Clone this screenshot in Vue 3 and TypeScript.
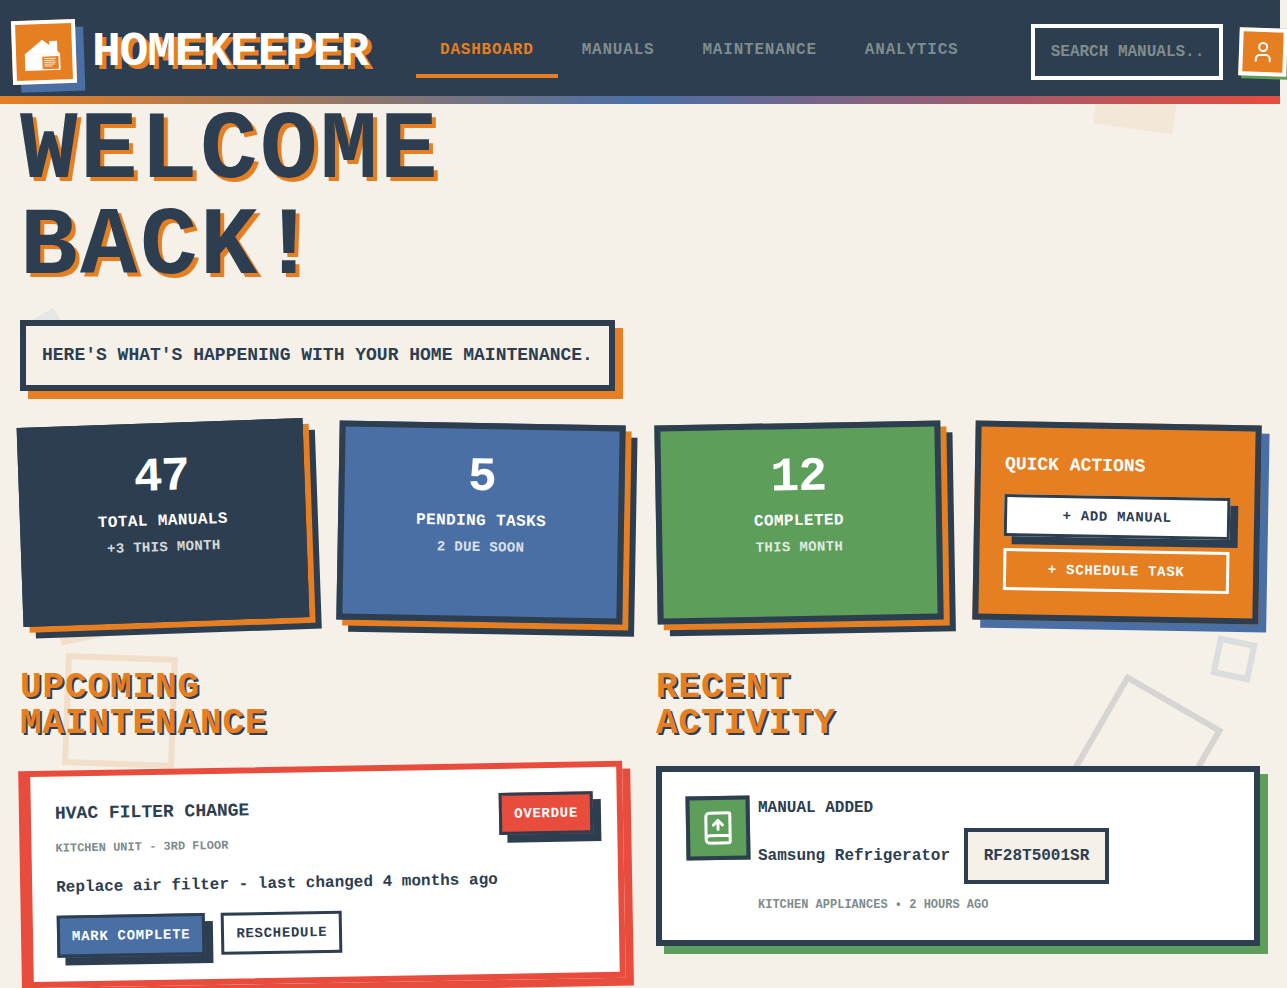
<script setup lang="ts">
interface NavLink { label: string; active: boolean }
interface Stat { value: string; label: string; note: string; tone: string }

const links: NavLink[] = [
  { label: 'DASHBOARD', active: true },
  { label: 'MANUALS', active: false },
  { label: 'MAINTENANCE', active: false },
  { label: 'ANALYTICS', active: false },
]

const stats: Stat[] = [
  { value: '47', label: 'TOTAL MANUALS', note: '+3 THIS MONTH', tone: 'navy' },
  { value: '5', label: 'PENDING TASKS', note: '2 DUE SOON', tone: 'blue' },
  { value: '12', label: 'COMPLETED', note: 'THIS MONTH', tone: 'green' },
]

const shapes: string[] = ['block-orange', 'block-blue', 'strip-orange', 'frame-orange', 'frame-blue', 'frame-navy']
</script>

<template>
  <div class="page">
    <div class="shapes" aria-hidden="true">
      <span v-for="shape in shapes" :key="shape" class="shape" :class="shape"></span>
    </div>

    <header class="header">
      <div class="brand">
        <div class="brand-icon">
          <svg width="40" height="40" viewBox="0 0 40 40">
            <path fill="#fff" d="M.7 21.8 18.4 7.8 25.4 13.2V9.2h8v10.2L36 22v16.3H.7z" />
            <path fill="none" stroke="#e67e22" stroke-width=".1" d="M2 22h33" />
            <path fill="#e67e22" d="M18.1 24.6h16.2v12.6H18.1z" />
            <path fill="none" stroke="#fff" stroke-width=".8" d="M20 26.6h11.8M20 28.5h10.5M20 30.4h11.8M20 32.3h10.5M20 34.2h8" />
          </svg>
        </div>
        <span class="brand-name">HOMEKEEPER</span>
      </div>
      <nav class="nav">
        <a v-for="link in links" :key="link.label" class="nav-link" :class="{ active: link.active }">{{ link.label }}</a>
      </nav>
      <div class="tools">
        <input class="search" type="text" placeholder="SEARCH MANUALS..." />
        <button class="user" aria-label="Account">
          <svg width="24" height="24" viewBox="0 0 24 24" fill="none" stroke="#fff" stroke-width="2" stroke-linecap="round" stroke-linejoin="round">
            <path d="M19 21v-2a4 4 0 0 0-4-4H9a4 4 0 0 0-4 4v2" />
            <circle cx="12" cy="7" r="4" />
          </svg>
        </button>
      </div>
    </header>

    <main class="main">
      <h1 class="title">WELCOME<br />BACK!</h1>
      <p class="subtitle">HERE'S WHAT'S HAPPENING WITH YOUR HOME MAINTENANCE.</p>

      <section class="stats">
        <article v-for="stat in stats" :key="stat.label" class="stat" :class="stat.tone">
          <div class="stat-value">{{ stat.value }}</div>
          <div class="stat-label">{{ stat.label }}</div>
          <div class="stat-note">{{ stat.note }}</div>
        </article>
        <article class="stat quick">
          <h3 class="quick-title">QUICK ACTIONS</h3>
          <div class="quick-list">
            <button class="btn btn-white raised">+ ADD MANUAL</button>
            <button class="btn btn-clear">+ SCHEDULE TASK</button>
          </div>
        </article>
      </section>

      <section class="columns">
        <div class="column">
          <h2 class="heading">UPCOMING<br />MAINTENANCE</h2>
          <article class="task">
            <div class="task-head">
              <div>
                <h3 class="task-title">HVAC FILTER CHANGE</h3>
                <p class="meta"><span>KITCHEN UNIT - 3RD FLOOR</span></p>
              </div>
              <span class="btn btn-red raised">OVERDUE</span>
            </div>
            <p class="task-text">Replace air filter - last changed 4 months ago</p>
            <div class="task-actions">
              <button class="btn btn-blue raised">MARK COMPLETE</button>
              <button class="btn btn-white">RESCHEDULE</button>
            </div>
          </article>
        </div>

        <div class="column">
          <h2 class="heading">RECENT<br />ACTIVITY</h2>
          <article class="activity">
            <div class="activity-icon">
              <svg width="36" height="36" viewBox="0 0 24 24" fill="none" stroke="#fff" stroke-width="2" stroke-linecap="round" stroke-linejoin="round">
                <path d="M12 13V7" />
                <path d="m9 10 3-3 3 3" />
                <path d="M4 19.5v-15A2.5 2.5 0 0 1 6.5 2H19a1 1 0 0 1 1 1v18a1 1 0 0 1-1 1H6.5a1 1 0 0 1 0-5H20" />
              </svg>
            </div>
            <div class="activity-body">
              <p>MANUAL ADDED</p>
              <p class="model-row">Samsung Refrigerator <span class="model">RF28T5001SR</span></p>
              <p class="meta"><span>KITCHEN APPLIANCES • 2 HOURS AGO</span></p>
            </div>
          </article>
        </div>
      </section>
    </main>
  </div>
</template>

<style>
html,
body {
  margin: 0;
  height: 988px;
  overflow: hidden;
  background: #f5f0e8;
}
</style>

<style scoped>
.page {
  --navy: #2c3e50;
  --orange: #e67e22;
  --blue: #4a6fa5;
  --green: #5d9e5a;
  --red: #e74c3c;
  --cream: #f5f0e8;
  --gray: #7f8c8d;
  position: relative;
  width: 1287px;
  height: 988px;
  overflow: hidden;
  background: var(--cream);
  color: var(--navy);
  font: bold 16px/24px "Liberation Mono", "Courier New", monospace;
}
.page * { box-sizing: border-box; }
h1, h2, h3, p { margin: 0; font-weight: bold; }
svg { display: block; flex: none; }
button, input { font: inherit; border-radius: 0; }

/* Decorative shapes scattered behind the content */
.shape { position: absolute; }
.block-orange { left: 1098px; top: 49px; width: 80px; height: 80px; background: var(--orange); opacity: .08; transform: rotate(8deg); }
.block-blue { left: 26px; top: 315px; width: 40px; height: 40px; background: var(--blue); opacity: .08; transform: rotate(-30deg); }
.strip-orange { left: 55px; top: 580px; width: 60px; height: 60px; background: var(--orange); opacity: .15; transform: rotate(-12deg); }
.frame-orange { left: 64px; top: 655px; width: 112px; height: 112px; border: 6px solid var(--orange); opacity: .15; transform: rotate(2deg); }
.frame-blue { left: 1214px; top: 639px; width: 40px; height: 40px; border: 6px solid var(--blue); opacity: .15; transform: rotate(12deg); }
.frame-navy { left: 1091px; top: 694px; width: 112px; height: 112px; border: 6px solid var(--navy); opacity: .15; transform: rotate(30deg); }

.header {
  position: relative;
  display: flex;
  align-items: center;
  gap: 48px;
  width: 1280px;
  height: 104px;
  padding-left: 12px;
  background: var(--navy);
}
.header::after {
  content: "";
  position: absolute;
  left: 0;
  right: 0;
  bottom: 0;
  height: 8px;
  background: linear-gradient(90deg, var(--orange), var(--blue), var(--red));
}
.brand { display: flex; align-items: center; gap: 16px; flex: none; }
.brand-icon {
  display: flex;
  align-items: center;
  justify-content: center;
  width: 64px;
  height: 64px;
  border: 4px solid #fff;
  background: var(--orange);
  box-shadow: 8px 8px 0 var(--blue);
  transform: rotate(-2deg);
}
.brand-name {
  width: 276px;
  color: #fff;
  font-size: 48px;
  line-height: 48px;
  letter-spacing: -1.2px;
  text-shadow: 4px 4px 0 var(--orange);
}
.nav { display: flex; flex: none; }
.nav-link {
  padding: 12px 24px;
  border-bottom: 4px solid transparent;
  color: var(--gray);
  letter-spacing: .8px;
}
.nav-link.active { color: var(--orange); border-color: var(--orange); }
.tools { display: flex; align-items: center; gap: 16px; flex: none; margin-left: .2px; }
.search {
  width: 192px;
  height: 56px;
  padding: 12px 16px;
  border: 4px solid #fff;
  outline: 0;
  background: var(--navy);
  color: #fff;
}
.search::placeholder { color: var(--gray); opacity: 1; }
.user {
  display: flex;
  align-items: center;
  justify-content: center;
  width: 48px;
  height: 48px;
  padding: 0;
  border: 4px solid #fff;
  background: var(--orange);
  box-shadow: 3px 3px 0 var(--green);
  transform: rotate(2deg);
}

.main { position: relative; width: 1280px; padding: 0 20px; }
.title {
  font-size: 96px;
  line-height: 96px;
  letter-spacing: 2.4px;
  text-shadow: 4px 4px 0 var(--orange);
}
.subtitle {
  width: fit-content;
  margin-top: 24px;
  padding: 16px;
  border: 6px solid var(--navy);
  background: var(--cream);
  box-shadow: 8px 8px 0 var(--orange);
  font-size: 18px;
  line-height: 27px;
}

.stats { display: grid; grid-template-columns: repeat(4, 1fr); gap: 32px; margin-top: 32px; }
.stat {
  padding: 24px;
  border: 6px solid var(--navy);
  box-shadow: 6px 6px 0 var(--orange), 12px 12px 0 var(--navy);
  color: #fff;
  text-align: center;
}
.navy { background: var(--navy); transform: rotate(-2deg); }
.blue { background: var(--blue); transform: rotate(1deg); }
.green { background: var(--green); transform: rotate(-1deg); }
.quick { background: var(--orange); box-shadow: 8px 8px 0 var(--blue); text-align: left; transform: rotate(1deg); }
.stat-value { font-size: 48px; line-height: 48px; letter-spacing: -1.2px; }
.stat-label { margin-top: 8px; letter-spacing: .4px; }
.stat-note { margin-top: 4px; font-size: 14px; line-height: 21px; letter-spacing: .35px; opacity: .8; }
.quick-title { font-size: 18px; line-height: 27px; }
.quick-list { display: flex; flex-direction: column; gap: 12px; margin-top: 16px; }

.btn {
  display: block;
  flex: none;
  padding: 8px 12px;
  border: 3px solid var(--navy);
  font-size: 14px;
  line-height: 20px;
  letter-spacing: .7px;
  text-align: center;
}
.raised { box-shadow: 8px 8px 0 var(--navy); }
.btn-white { background: #fff; color: var(--navy); }
.btn-clear { background: transparent; color: #fff; border-color: #fff; }
.btn-blue { background: var(--blue); color: #fff; }
.btn-red { background: var(--red); color: #fff; }

.columns { display: grid; grid-template-columns: 1fr 1fr; gap: 32px; margin-top: 48px; }
.column { display: flex; flex-direction: column; gap: 24px; }
.heading {
  color: var(--orange);
  font-size: 36px;
  line-height: 36px;
  letter-spacing: .9px;
  text-shadow: 2px 2px 0 var(--navy);
}
.task {
  padding: 24px;
  border: 6px solid var(--red);
  border-left-width: 12px;
  background: #fff;
  box-shadow: 8px 8px 0 var(--red);
  transform: rotate(-1deg);
}
.task-head { display: flex; align-items: flex-start; justify-content: space-between; }
.task-title { font-size: 18px; line-height: 27px; }
.meta { height: 24px; margin-top: 8px; color: var(--gray); }
.meta span { font-size: 12px; }
.task-text { margin-top: 16px; }
.task-actions { display: flex; gap: 16px; margin-top: 16px; }

.activity {
  display: flex;
  align-items: flex-start;
  gap: 8px;
  padding: 24px;
  border: 6px solid var(--navy);
  background: #fff;
  box-shadow: 8px 8px 0 var(--green);
}
.activity-icon {
  display: flex;
  align-items: center;
  justify-content: center;
  flex: none;
  width: 64px;
  height: 64px;
  border: 4px solid var(--navy);
  background: var(--green);
  transform: rotate(-1deg);
}
.model-row { margin-top: 8px; }
.model {
  display: inline-block;
  margin-left: 4px;
  padding: 12px 16px;
  border: 4px solid var(--navy);
  background: var(--cream);
}
</style>
